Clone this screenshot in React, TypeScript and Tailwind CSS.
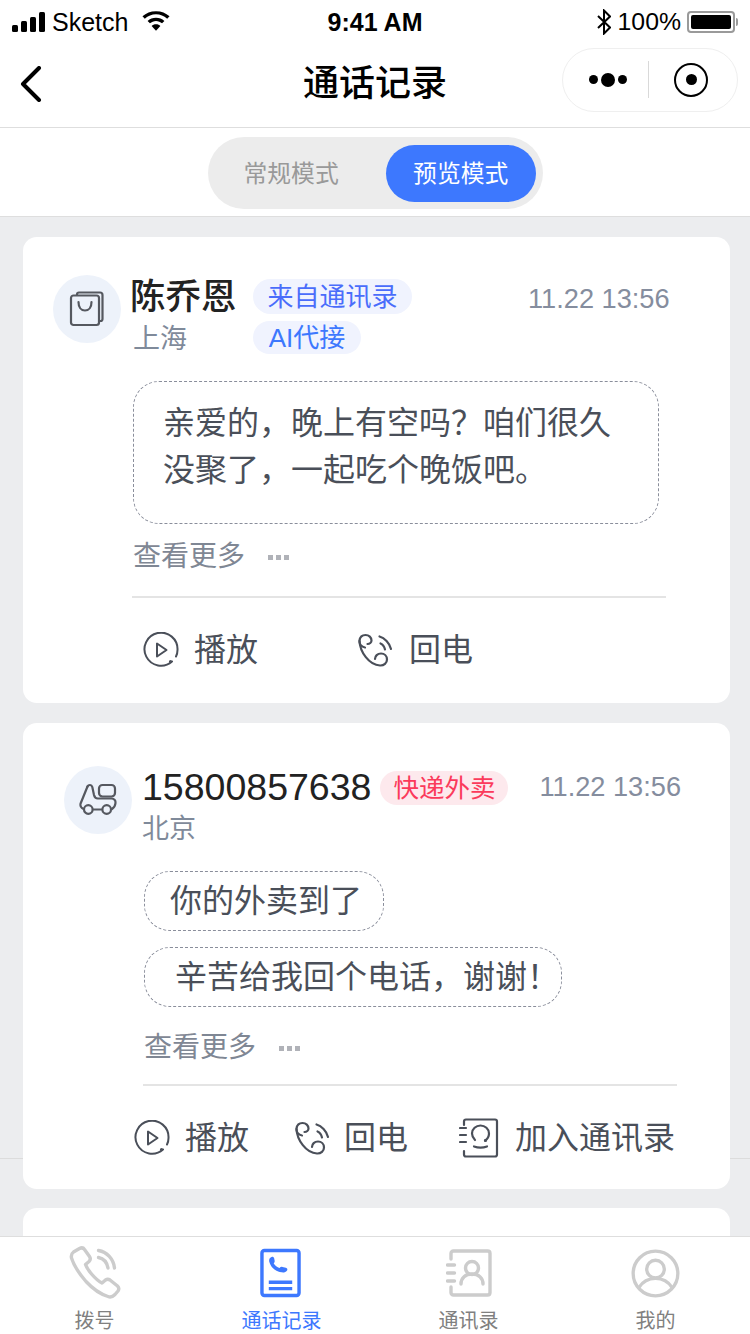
import type { ReactNode } from "react";

const font = { fontFamily: '"Liberation Sans", "Noto Sans CJK SC", sans-serif' };

function PlayIcon() {
  return (
    <svg width="36" height="36" viewBox="0 0 36 36" fill="none" stroke="#4a4f59" strokeWidth="2" strokeLinecap="round" strokeLinejoin="round">
      <path d="M29 29.500A16.500 16.500 0 1 1 34.500 18c0 2.500-.5 4.500-1.500 6.500" />
      <path d="M14 11.500v13l9.500-6.500z" />
      <circle cx="27.500" cy="29.500" r=".6" fill="#4a4f59" />
    </svg>
  );
}

function CallIcon() {
  return (
    <svg width="36" height="36" viewBox="0 0 36 36" fill="none" stroke="#4a4f59" strokeWidth="2.200" strokeLinecap="round" strokeLinejoin="round">
      <path d="M8 15.500C4.500 15 2 12 2.500 8.500 3 5 5.500 3 8.500 3c3.500 0 6 2.500 6 5.500 0 2-1.800 3.500-4 3.500" />
      <path d="M2.500 9c.5 11 9.500 24 20.500 24.500 4 .2 7-2.500 7-6s-2.500-6-6-6-6 2.500-6 5.500" />
      <path d="M22.500 4.500c5 1.500 10 6.500 11.500 12.500" />
      <path d="M23.500 11.500c2 .8 3.800 3 4.500 6" />
    </svg>
  );
}

function AddContactIcon() {
  return (
    <svg width="40" height="40" viewBox="0 0 40 40" fill="none" stroke="#4a4f59" strokeWidth="2.200" strokeLinecap="round" strokeLinejoin="round">
      <path d="M5 7V3.500C5 2.500 5.800 1.500 7 1.500h29c1 0 2 1 2 2v33c0 1-1 2-2 2H7c-1.200 0-2-1-2-2V33" />
      <path d="M1 10h6M1 17h6M1 24h6" />
      <path d="M16 22c-2-2-3-4-3-6.500C13 11 17 7.500 21.500 7.500S30 11 30 15.500c0 3-1.500 5.500-4 7" />
      <path d="M15 28.500c4 1.500 9 1.500 13 0" />
      <circle cx="26.500" cy="22.500" r=".5" />
    </svg>
  );
}

function BagIcon() {
  return (
    <svg width="36" height="36" viewBox="0 0 36 36" fill="none" stroke="#55585f" strokeWidth="2.200" strokeLinecap="round" strokeLinejoin="round">
      <path d="M8 4V3.500C8 2 9 1.500 10 1.500h21c1.500 0 2.500 1 2.500 2.500v24c0 1-.5 2-2 2H30" />
      <rect x="2" y="4.500" width="28" height="29.500" rx="2.500" />
      <path d="M9.500 11c0 5 2.500 8.500 6.500 8.500s6.500-3.500 6.500-8.500" />
    </svg>
  );
}

function TruckIcon() {
  return (
    <svg width="38" height="34" viewBox="0 0 38 34" fill="none" stroke="#55585f" strokeWidth="2.200" strokeLinecap="round" strokeLinejoin="round">
      <rect x="20" y="2" width="16" height="11.500" rx="3.500" />
      <path d="M8.500 3.500c1-2 4-2.200 4.800.5l1.700 8c.5 2 1.700 3.500 3.800 3.500h13.700c2.500 0 4.300 1.800 4 4.500-.2 2.500-1.300 4.500-3.500 6" />
      <path d="M8.500 3.500L1.800 20c-1 2.500.2 5 2.700 6" />
      <circle cx="9.300" cy="26.500" r="4.300" />
      <circle cx="27.700" cy="26.500" r="4.300" />
      <path d="M14 26.500h9" />
    </svg>
  );
}

function Avatar({ children }: { children: ReactNode }) {
  return (
    <div className="flex h-[68px] w-[68px] shrink-0 items-center justify-center rounded-full bg-[#edf2fa]">
      {children}
    </div>
  );
}

function Action({ icon, label, gap = "gap-[15px]" }: { icon: ReactNode; label: string; gap?: string }) {
  return (
    <div className={`flex items-center ${gap}`}>
      {icon}
      <span className="text-[32px] leading-[40px] text-[#4a4f59]">{label}</span>
    </div>
  );
}

function More() {
  return (
    <div className="flex h-[40px] items-center">
      <span className="text-[28px] leading-[40px] text-[#7f8794]">查看更多</span>
      <span className="ml-[23px] flex gap-[3px]">
        <i className="h-[5px] w-[5px] bg-[#b0b2b8]" />
        <i className="h-[5px] w-[5px] bg-[#b0b2b8]" />
        <i className="h-[5px] w-[5px] bg-[#b0b2b8]" />
      </span>
    </div>
  );
}

function TabItem({ icon, label, active }: { icon: ReactNode; label: string; active?: boolean }) {
  return (
    <div className="flex w-[187px] flex-col items-center pt-[7px]">
      <div className="flex h-[58px] items-center justify-center">{icon}</div>
      <span className={`mt-[6px] text-[20px] leading-[26px] ${active ? "text-[#3d78fe]" : "text-[#808080]"}`}>{label}</span>
    </div>
  );
}

export default function App() {
  return (
    <div className="relative h-[1334px] w-[750px] overflow-hidden bg-[#ecedef]" style={font}>
      <header className="bg-white">
        <div className="flex h-[40px] items-center justify-between pl-[12px] pr-[12px] pt-[3px] text-black">
          <div className="flex w-[250px] items-center">
            <svg width="34" height="20" viewBox="0 0 34 20" fill="#000">
              <rect x="0" y="13" width="6" height="7" rx="1.500" />
              <rect x="9" y="9" width="6" height="11" rx="1.500" />
              <rect x="18" y="5" width="6" height="15" rx="1.500" />
              <rect x="27" y="0" width="6" height="20" rx="1.500" />
            </svg>
            <span className="ml-[6px] text-[25px] leading-[30px]">Sketch</span>
            <svg className="ml-[14px]" width="28" height="21" viewBox="0 0 30 22" fill="#000">
              <path d="M15 0C9 0 4.500 2 0.500 5.500L3 8c3.500-3 7.500-4.800 12-4.800S23.500 5 27 8l2.500-2.500C25.500 2 21 0 15 0z" />
              <path d="M15 7c-3.500 0-6.500 1.200-9 3.400l2.500 2.500c1.800-1.500 4-2.500 6.500-2.500s4.700 1 6.500 2.500l2.500-2.500C21.500 8.200 18.500 7 15 7z" />
              <path d="M15 14c-2 0-3.500.6-4.700 1.700L15 21l4.700-5.300C18.500 14.600 17 14 15 14z" />
            </svg>
          </div>
          <span className="text-[25px] font-bold leading-[30px]">9:41 AM</span>
          <div className="flex w-[250px] items-center justify-end">
            <svg width="14" height="26" viewBox="0 0 14 26" fill="none" stroke="#000" strokeWidth="2">
              <path d="M1 7l12 11.500-6 6V1.500l6 6L1 19" />
            </svg>
            <span className="ml-[7px] text-[24.800px] leading-[30px]">100%</span>
            <div className="ml-[6px] flex h-[22px] w-[48px] items-center rounded-[4px] border-2 border-[#9a9a9a] p-[2px]">
              <div className="h-full w-full rounded-[2px] bg-black" />
            </div>
            <div className="ml-[1px] h-[8px] w-[2px] rounded-r bg-[#9a9a9a]" />
          </div>
        </div>
        <div className="grid h-[88px] grid-cols-[176px_1fr_176px] items-center border-b border-[#dedede] px-[12px]">
          <svg className="ml-[8px]" width="22" height="36" viewBox="0 0 22 36" fill="none" stroke="#000" strokeWidth="4" strokeLinecap="round" strokeLinejoin="round">
            <path d="M19 2L3 18l16 16" />
          </svg>
          <span className="text-center text-[36px] font-medium leading-[48px] text-black">通话记录</span>
          <div className="mb-[8px] flex h-[64px] w-[176px] items-center rounded-full border border-[#efefef] bg-white">
            <div className="ml-[26px] flex items-center gap-[3px]">
              <i className="h-[9px] w-[9px] rounded-full bg-black" />
              <i className="h-[14px] w-[14px] rounded-full bg-black" />
              <i className="h-[9px] w-[9px] rounded-full bg-black" />
            </div>
            <div className="ml-[21px] h-[37px] w-px bg-[#d9d9d9]" />
            <div className="ml-[25px] flex h-[34px] w-[34px] items-center justify-center rounded-full border-2 border-black">
              <i className="h-[11px] w-[11px] rounded-full bg-black" />
            </div>
          </div>
        </div>
        <div className="flex h-[89px] items-center justify-center border-b border-[#dedede] pt-[2px]">
          <div className="flex h-[72px] w-[335px] items-center rounded-full bg-[#ececec] pl-[36px] pr-[7px]">
            <span className="shrink-0 whitespace-nowrap pt-[2px] text-[23.800px] text-[#999999]">常规模式</span>
            <span className="ml-[47px] flex h-[57px] w-[150px] shrink-0 items-center justify-center whitespace-nowrap rounded-full bg-[#3d78fe] pt-[2px] text-[23.800px] text-white">预览模式</span>
          </div>
        </div>
      </header>

      <main className="pl-[23px] pr-[20px] pt-[20px]">
        <section className="h-[466px] rounded-[14px] bg-white pl-[30px] pt-[38px]">
          <div className="flex">
            <Avatar><BagIcon /></Avatar>
            <div className="ml-[9px] w-[123px]">
              <div className="-mt-[1px] text-[35.500px] font-medium leading-[46px] text-[#222222]">陈乔恩</div>
              <div className="ml-[3px] text-[27px] leading-[38px] text-[#7f8a9a]">上海</div>
            </div>
            <div className="mt-[4px] flex flex-col items-start gap-[7px]">
              <span className="flex h-[35px] w-[159px] items-center justify-center rounded-full bg-[#f0f3fe] pt-[2px] text-[26px] text-[#4a6dfb]">来自通讯录</span>
              <span className="flex h-[33px] w-[108px] items-center justify-center rounded-full bg-[#f0f3fe] pt-[2px] text-[26px] text-[#3d78fe]">AI代接</span>
            </div>
            <span className="ml-[116px] mt-[7px] text-[27.200px] leading-[34px] text-[#858d9e]">11.22 13:56</span>
          </div>
          <div className="ml-[80px] mt-[23px] h-[143px] w-[526px] rounded-[26px] border border-dashed border-[#8a8e9b] pl-[29px] pt-[18px] text-[32px] leading-[47px] text-[#4a4f59]">
            亲爱的，晚上有空吗？咱们很久<br />没聚了，一起吃个晚饭吧。
          </div>
          <div className="ml-[80px] mt-[13px]"><More /></div>
          <div className="ml-[79px] mt-[19px] h-[2px] w-[534px] bg-[#e4e4e4]" />
          <div className="ml-[90px] mt-[32px] flex items-center">
            <Action icon={<PlayIcon />} label="播放" />
            <div className="ml-[99px]"><Action icon={<CallIcon />} label="回电" gap="gap-[16px]" /></div>
          </div>
        </section>

        <section className="mt-[20px] h-[466px] rounded-[14px] bg-white pl-[41px] pt-[43px]">
          <div className="flex">
            <Avatar><TruckIcon /></Avatar>
            <div className="ml-[10px]">
              <div className="flex items-center">
                <span className="text-[37.500px] leading-[42px] text-[#222222]">15800857638</span>
                <span className="ml-[9px] mt-[2px] flex h-[34px] w-[128px] items-center justify-center rounded-full bg-[#fde9ed] pt-[1px] text-[25.500px] text-[#fb3a5b]">快递外卖</span>
                <span className="ml-[31px] text-[27.200px] leading-[34px] text-[#858d9e]">11.22 13:56</span>
              </div>
              <div className="mt-[2px] text-[27px] leading-[38px] text-[#7f8a9a]">北京</div>
            </div>
          </div>
          <div className="ml-[80px] mt-[23px] flex flex-col items-start gap-[16px] text-[32px] text-[#4a4f59]">
            <div className="flex h-[60px] w-[240px] items-center rounded-[26px] border border-dashed border-[#8a8e9b] pl-[25px]">你的外卖到了</div>
            <div className="flex h-[60px] w-[418px] items-center rounded-[26px] border border-dashed border-[#8a8e9b] pl-[30px]">辛苦给我回个电话，谢谢！</div>
          </div>
          <div className="ml-[80px] mt-[21px]"><More /></div>
          <div className="ml-[79px] mt-[16px] h-[2px] w-[534px] bg-[#e4e4e4]" />
          <div className="ml-[70px] mt-[32px] flex items-center">
            <Action icon={<PlayIcon />} label="播放" />
            <div className="ml-[45px]"><Action icon={<CallIcon />} label="回电" gap="gap-[14px]" /></div>
            <div className="ml-[51px]"><Action icon={<AddContactIcon />} label="加入通讯录" gap="gap-[16px]" /></div>
          </div>
        </section>

        <section className="mt-[19px] h-[120px] rounded-[14px] bg-white" />
      </main>

      <div className="absolute left-0 top-[1158px] h-px w-[23px] bg-[#dcdcdc]" />
      <div className="absolute left-[730px] top-[1158px] h-px w-[20px] bg-[#dcdcdc]" />

      <nav className="absolute bottom-0 left-0 flex h-[98px] w-full border-t border-[#dedede] bg-white pl-px">
        <TabItem
          label="拨号"
          icon={
            <svg width="54" height="54" viewBox="0 0 54 54" fill="none" stroke="#cccccc" strokeWidth="3.400" strokeLinecap="round" strokeLinejoin="round">
              <path d="M11.500 2.500c2-1 4-.5 5 1l5 7c1 1.500 1 3.500-.5 5l-3.500 3c1 3 3.500 6.500 6.500 10s6 6.500 10 8.500l3.500-3c1.500-1 3-1 4.500 0l7.500 6c1.500 1.500 1.500 3.500.5 5l-3 3.500c-2 2-4.500 3-7 2-8-2.500-15.500-8-22-15C11.500 28 6 20 3.500 12c-.5-2.500 0-4.500 2-6z" />
              <path d="M30.500 4.500C39 6 45.500 13 46.500 22" />
              <path d="M30.500 11.500c5 1 8.500 5 9.500 10.500" />
            </svg>
          }
        />
        <TabItem
          active
          label="通话记录"
          icon={
            <svg className="mr-[3px]" width="41" height="50" viewBox="0 0 42 50" fill="none">
              <rect x="2" y="2" width="38" height="46" rx="2.500" stroke="#3d78fe" strokeWidth="3.500" />
              <path d="M11 9c1.500-1 3-.5 3.500 1l.5 2.500c.2 1-.5 2-1 2.500 1.500 2.500 3.500 4 6 4.800.8-.8 1.800-1.300 3-1l3.500.8c1.500.4 2 1.800 1 3-1 1.500-3 2-5.500 1.700-6-.7-11-5-12.500-10.800-.4-2 0-3.500 1.500-4.500z" fill="#3d78fe" />
              <path d="M9 34.500h24M9 41h24" stroke="#3d78fe" strokeWidth="3.500" />
            </svg>
          }
        />
        <TabItem
          label="通讯录"
          icon={
            <svg width="46" height="48" viewBox="0 0 46 48" fill="none" stroke="#cccccc" strokeWidth="3.400" strokeLinecap="round" strokeLinejoin="round">
              <path d="M5 10V4.500C5 3 6 2 7.500 2h34C43 2 44 3 44 4.500v39c0 1.500-1 2.500-2.500 2.500h-34C6 46 5 45 5 43.500V38" />
              <path d="M1.500 16h7M1.500 24h7M1.500 32h7" />
              <circle cx="26" cy="19" r="6.500" />
              <path d="M15 35c0-6 4.500-10 11-10s11 4 11 10" />
            </svg>
          }
        />
        <TabItem
          label="我的"
          icon={
            <svg width="49" height="49" viewBox="0 0 50 50" fill="none" stroke="#cccccc" strokeWidth="3.400" strokeLinecap="round">
              <circle cx="25" cy="25" r="22.800" />
              <circle cx="25" cy="20.500" r="9" />
              <path d="M8 39.500C12 33 18 30 25 30s13 3 17 9.500" />
            </svg>
          }
        />
      </nav>
    </div>
  );
}
